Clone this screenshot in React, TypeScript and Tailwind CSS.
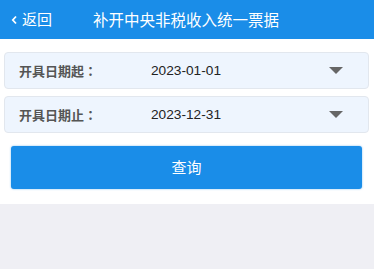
import React from "react";

const font = { fontFamily: '"Noto Sans CJK SC", "Liberation Sans", sans-serif' };

function Field({ label, value }: { label: string; value: string }) {
  return (
    <div className="flex h-[37px] items-center rounded-[4px] border border-[#e2e7ee] bg-[#eef5fe] pl-[14px] pr-[25px]">
      <span
        className="w-[132px] text-[13px] font-bold text-[#555]"
        style={{ fontFamily: '"Noto Sans CJK TC", "Noto Sans CJK SC", sans-serif' }}
      >
        {label}
      </span>
      <span className="flex-1 pt-[2px] text-[13.7px] text-[#222]" style={{ fontFamily: '"Liberation Sans", sans-serif' }}>
        {value}
      </span>
      <svg width="14" height="8" viewBox="0 0 14 8">
        <polygon points="0,0 14,0 7,7" fill="#666" />
      </svg>
    </div>
  );
}

export default function App() {
  return (
    <div className="flex h-[269px] w-[374px] flex-col bg-white" style={font}>
      <div className="flex h-[39px] items-center bg-[#1a8de8] text-white">
        <div className="flex items-center pl-[11px]">
          <svg width="7" height="10" viewBox="0 0 7 10" className="mr-[4px]">
            <polyline points="5,1.5 1.8,5 5,8.5" fill="none" stroke="white" strokeWidth="1.8" />
          </svg>
          <span className="text-[15px]">返回</span>
        </div>
        <span className="ml-[41px] text-[15.5px]">补开中央非税收入统一票据</span>
      </div>
      <div className="flex flex-col px-[4px] pt-[13px]">
        <div className="mr-[1px] flex flex-col gap-[7px]">
          <Field label="开具日期起：" value="2023-01-01" />
          <Field label="开具日期止：" value="2023-12-31" />
        </div>
        <div className="px-[7px] pb-[15px] pt-[13px]">
          <button className="flex h-[43px] w-[351px] items-center justify-center rounded-[3px] bg-[#1a8de8] text-[15px] text-white shadow-[0_0_2px_rgba(26,141,232,0.6)]">
            查询
          </button>
        </div>
      </div>
      <div className="flex-1 bg-[#efeff4]" />
    </div>
  );
}
